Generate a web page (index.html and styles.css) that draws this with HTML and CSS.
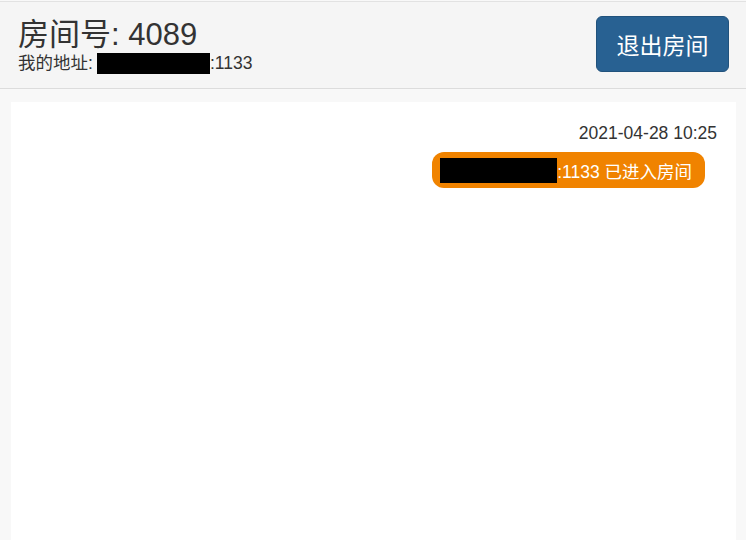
FILE: index.html
```html
<!DOCTYPE html>
<html lang="zh">
<head>
<meta charset="utf-8">
<link rel="stylesheet" href="styles.css">
</head>
<body>
<header class="top">
  <div class="info">
    <h1 class="title">房间号: 4089</h1>
    <div class="addr">我的地址: <span class="mask mask-addr"></span>:1133</div>
  </div>
  <button class="leave">退出房间</button>
</header>
<main class="stage">
  <section class="panel">
    <div class="msg">
      <div class="time">2021-04-28 10:25</div>
      <div class="bubble"><span class="mask mask-bubble"></span>:1133 已进入房间</div>
    </div>
  </section>
</main>
</body>
</html>
```

FILE: styles.css
```css
html, body {
  margin: 0;
  padding: 0;
  background: #f8f8f8;
  font-family: "Liberation Sans", Arial, "Noto Sans CJK SC", sans-serif;
  color: #333;
  overflow: hidden;
}
.top {
  margin-top: 1px;
  height: 86px;
  background: #f5f5f5;
  border-top: 1px solid #e2e2e2;
  border-bottom: 1px solid #dcdcdc;
  display: flex;
  align-items: flex-start;
  justify-content: space-between;
  padding: 0 17px 0 18px;
  box-sizing: content-box;
}
.info {
  padding-top: 15px;
}
.title {
  margin: 0;
  font-weight: normal;
  font-size: 31px;
  line-height: 36px;
  color: #333;
}
.addr {
  font-size: 17.5px;
  line-height: 21px;
  margin-top: 0;
  display: flex;
  align-items: center;
}
.mask {
  display: inline-block;
  background: #000;
}
.mask-addr {
  width: 113px;
  height: 21px;
  margin-left: 4px;
}
.leave {
  margin-top: 14px;
  width: 133px;
  height: 56px;
  background: #286192;
  border: 1px solid #21527c;
  border-radius: 6px;
  color: #fff;
  font-family: "Liberation Sans", Arial, "Noto Sans CJK SC", sans-serif;
  font-size: 23px;
  padding: 0;
}
.stage {
  padding: 13px 10px 0 11px;
}
.panel {
  background: #fff;
  height: 440px;
  padding: 20px 19px 0 0;
}
.msg {
  display: flex;
  flex-direction: column;
  align-items: flex-end;
}
.time {
  font-size: 17.5px;
  line-height: 22px;
  color: #333;
}
.bubble {
  margin-top: 8px;
  margin-right: 12px;
  background: #f08300;
  color: #fff;
  border-radius: 12px;
  height: 36px;
  padding: 0 13px 0 8px;
  display: flex;
  align-items: center;
  font-size: 17.5px;
}
.mask-bubble {
  width: 117px;
  height: 25px;
}
```
